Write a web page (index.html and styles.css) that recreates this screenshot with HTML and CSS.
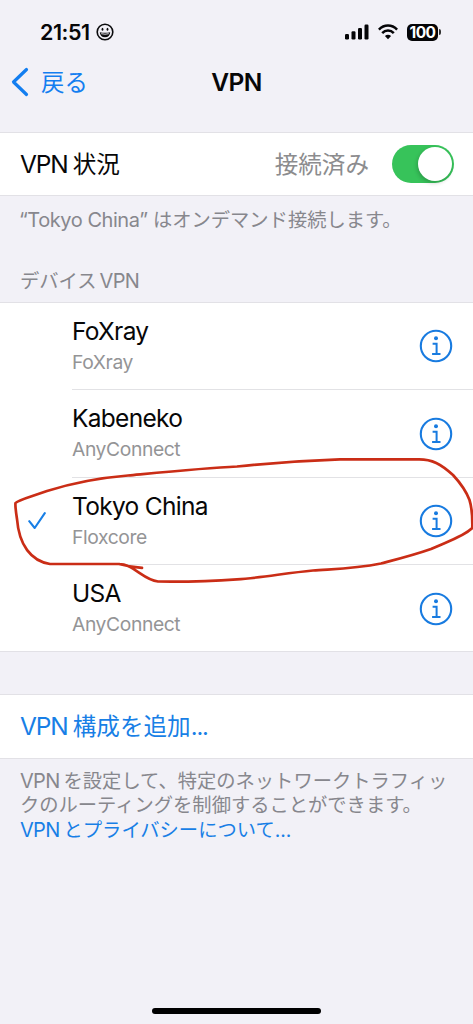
FILE: index.html
```html
<!DOCTYPE html>
<html lang="ja">
<head>
<meta charset="utf-8">
<title>VPN</title>
<link rel="stylesheet" href="styles.css">
</head>
<body>
<svg class="defs" width="0" height="0" aria-hidden="true">
  <symbol id="info" viewBox="0 0 34 34">
    <circle cx="17" cy="17" r="15.2" fill="none" stroke="currentColor" stroke-width="2.1"/>
    <circle cx="17" cy="9.2" r="2" fill="currentColor"/>
    <path d="M13.6 14.7H17.6V25M13.1 25H21.5" fill="none" stroke="currentColor" stroke-width="2"/>
  </symbol>
</svg>
<div class="screen">
  <header class="status">
    <div class="clock">
      <span class="time">21:51</span>
      <svg class="face" width="18" height="18" viewBox="0 0 18 18">
        <circle cx="9" cy="9" r="7.8" fill="none" stroke="#0b0b0d" stroke-width="1.6"/>
        <ellipse cx="6.5" cy="6.3" rx=".9" ry="1.5" fill="#0b0b0d"/>
        <ellipse cx="11.5" cy="6.3" rx=".9" ry="1.5" fill="#0b0b0d"/>
        <path d="M3.8 9.2Q9 10.4 14.2 9.2Q13.8 14.3 9 14.3Q4.200 14.3 3.8 9.200Z" fill="#0b0b0d"/>
        <path d="M5.200 10.700Q9 11.700 12.800 10.700" fill="none" stroke="#f2f1f7" stroke-width=".9"/>
      </svg>
    </div>
    <div class="indicators">
      <svg width="24" height="16" viewBox="0 0 24 16" fill="#050507">
        <rect x="0" y="10" width="4" height="5.500" rx="1.200"/>
        <rect x="6.500" y="7.300" width="4" height="8.200" rx="1.200"/>
        <rect x="13" y="4" width="4" height="11.500" rx="1.200"/>
        <rect x="19.500" y="0.500" width="4" height="15" rx="1.200"/>
      </svg>
      <svg width="20" height="16" viewBox="0 0 20 16">
        <g fill="none" stroke="#050507" stroke-width="2.500">
          <path d="M.9 5.600Q4.800 1.600 10 1.600T19.100 5.600"/>
          <path d="M4.200 9.100Q6.600 6.600 10 6.600T15.800 9.100"/>
        </g>
        <path d="M6.900 11.900Q10 9.400 13.100 11.900L10 15.200Z" fill="#050507"/>
      </svg>
      <div class="battery"><span class="level">100</span><i class="cap"></i></div>
    </div>
  </header>
  <nav class="nav">
    <a class="back">
      <svg width="18" height="30" viewBox="0 0 18 30"><path d="M15.500 2.500L2.500 15L15.500 27.500" fill="none" stroke="currentColor" stroke-width="3.200" stroke-linecap="round" stroke-linejoin="round"/></svg>
      <span class="back-label">戻る</span>
    </a>
    <h1 class="title">VPN</h1>
  </nav>
  <main>
    <section class="group state">
      <span class="body"><span class="lat-vpn">VPN</span>状況</span>
      <span class="value">接続済み</span>
      <span class="switch"><i class="knob"></i></span>
    </section>
    <p class="note"><span class="note-lat">“Tokyo China”</span> はオンデマンド接続します。</p>
    <h2 class="heading">デバイス<span class="heading-lat">VPN</span></h2>
    <ul class="group list">
      <li class="item"><span class="check"></span><div class="cell"><div class="names"><div class="name">FoXray</div><div class="sub">FoXray</div></div><svg class="info"><use href="#info"/></svg></div></li>
      <li class="item"><span class="check"></span><div class="cell"><div class="names"><div class="name">Kabeneko</div><div class="sub">AnyConnect</div></div><svg class="info"><use href="#info"/></svg></div></li>
      <li class="item"><span class="check"><svg width="18" height="18" viewBox="0 0 18 18"><path d="M1.200 9.200L6.700 16L16.800 1.200" fill="none" stroke="currentColor" stroke-width="2.100" stroke-linecap="round" stroke-linejoin="round"/></svg></span><div class="cell"><div class="names"><div class="name">Tokyo China</div><div class="sub">Floxcore</div></div><svg class="info"><use href="#info"/></svg></div></li>
      <li class="item"><span class="check"></span><div class="cell"><div class="names"><div class="name">USA</div><div class="sub">AnyConnect</div></div><svg class="info"><use href="#info"/></svg></div></li>
    </ul>
    <section class="group add"><a class="body"><span class="lat-vpn">VPN</span>構成を追加<span class="dots">...</span></a></section>
    <p class="about"><span class="note-vpn">VPN</span>を設定して、特定のネットワークトラフィックのルーティングを制御することができます。<br><a class="link"><span class="note-vpn">VPN</span>とプライバシーについて<span class="dots">...</span></a></p>
  </main>
  <div class="home"></div>
  <svg class="scribble" width="473" height="1024" viewBox="0 0 473 1024">
    <path d="M142 567.800Q130 567 119 564H50C31 561 19 545 17 519Q15 506 15.500 503C18 500 27 498 47 491Q85 479 128 475.500C165 472 205 468 237 466.500Q290 461 340 459.300H418C432 459 441 464 453 475Q465 488 469.500 500C472 508 472.500 518 472.300 528C463 537 446 542 431 549C414 555 398 559 381 563.500C354 569 332 569 313 570.500C286 573 260 578 237 579.300Q200 582 158 581.500C146 580 139 571 128 566Q124 564 119 564" fill="none" stroke="#ca2d16" stroke-width="2.700" stroke-linecap="round" stroke-linejoin="round"/>
  </svg>
</div>
</body>
</html>
```
FILE: styles.css
```css
* { box-sizing: border-box; }
body {
  margin: 0;
  font-family: Inter, "Noto Sans CJK JP", sans-serif;
  color: #070708;
  background: #f2f1f7;
}
h1, h2, p, ul { margin: 0; padding: 0; font-weight: 400; }
svg { display: block; flex: none; }
.defs { position: absolute; }
.screen {
  position: relative;
  display: flex;
  flex-direction: column;
  width: 473px;
  height: 1024px;
  overflow: hidden;
}
.status {
  display: flex;
  justify-content: space-between;
  height: 63px;
  padding: 16px 32px 15px 40px;
}
.clock { display: flex; align-items: center; gap: 5px; }
.time { font-size: 21.5px; font-weight: 600; letter-spacing: -0.45px; width: 51px; white-space: nowrap; }
.indicators { display: flex; align-items: center; gap: 9px; }
.battery { display: flex; align-items: center; gap: 1px; }
.level {
  width: 31px;
  height: 17px;
  border-radius: 5px;
  background: #050507;
  color: #fff;
  font-size: 15.5px;
  font-weight: 700;
  line-height: 17px;
  letter-spacing: -0.5px;
  text-align: center;
}
.cap { width: 2px; height: 6px; border-radius: 0 2px 2px 0; background: #333; }
.nav {
  display: grid;
  grid-template-columns: 1fr auto 1fr;
  align-items: center;
  height: 38px;
  padding: 0 11px;
}
.back { display: flex; align-items: center; gap: 12px; color: #137ef0; }
.back-label { font-size: 23.4px; line-height: 36px; padding-top: 1px; }
.title { font-size: 24.5px; font-weight: 600; letter-spacing: -0.5px; line-height: 38px; }
main { padding-top: 31px; }
.group { background: #fff; border: solid #e2e1e6; border-width: 1px 0; }
.state {
  display: flex;
  align-items: center;
  height: 64px;
  padding: 0 19px 0 20px;
}
.body { font-size: 23.6px; line-height: 62px; white-space: nowrap; }
.lat-vpn { font-size: 24.5px; letter-spacing: -1.1px; margin-right: 5px; }
.body .dots { letter-spacing: -1.1px; }
.value { margin-left: auto; padding-top: 1px; font-size: 23.6px; line-height: 62px; color: #8c8c8e; }
.switch {
  display: flex;
  justify-content: flex-end;
  width: 62px;
  height: 38px;
  margin-left: 23px;
  padding: 2px;
  border-radius: 19px;
  background: #37c35a;
}
.knob { width: 34px; height: 34px; border-radius: 50%; background: #fff; box-shadow: -1px 2px 4px #0003; }
.note {
  height: 66px;
  padding: 8px 19px 0;
  font-size: 19.3px;
  line-height: 32px;
  color: #87878d;
  white-space: nowrap;
}
.note-lat { font-size: 20px; letter-spacing: -0.45px; }
.heading { height: 40px; padding: 3px 20px 0; font-size: 19.3px; line-height: 32px; color: #87878d; }
.heading-lat, .note-vpn { font-size: 20px; letter-spacing: -0.7px; margin-left: 3px; }
.note-vpn { margin: 0 4px 0 0; }
.list { height: 350px; list-style: none; }
.item { display: flex; height: 87.4px; }
.check { display: flex; align-items: center; width: 72px; padding-left: 28px; color: #187fe6; }
.cell { display: flex; flex: 1; align-items: center; justify-content: space-between; padding-right: 20px; border-bottom: 1px solid #e2e2e5; }
.item:last-child .cell { border-bottom: 0; }
.names { align-self: flex-start; padding-top: 13px; white-space: nowrap; }
.name { font-size: 24.5px; line-height: 30px; letter-spacing: -0.7px; }
.sub { font-size: 19.3px; line-height: 32px; letter-spacing: -0.4px; color: #949496; }
.info { width: 34px; height: 34px; color: #187be0; }
.add { display: flex; height: 65px; margin-top: 42px; padding: 0 20px; color: #187fe6; }
.about {
  padding: 10px 20px 0;
  font-size: 19.3px;
  line-height: 24.3px;
  color: #87878d;
}
.link { color: #187fe6; }
.home { width: 169px; height: 6px; margin: auto auto 10px; border-radius: 3px; background: #000; }
.scribble { position: absolute; inset: 0; pointer-events: none; }
```
